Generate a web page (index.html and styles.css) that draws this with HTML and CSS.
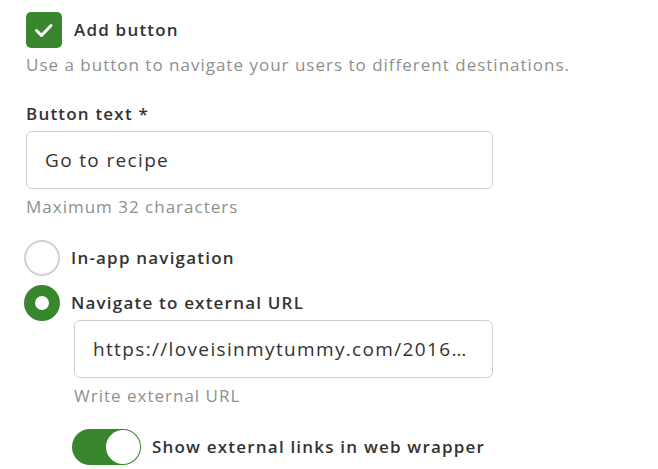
FILE: index.html
```html
<!DOCTYPE html>
<html lang="en">
<head>
<meta charset="utf-8">
<title>Button settings</title>
<link rel="stylesheet" href="styles.css">
</head>
<body>
<div class="panel">
  <label class="check-row">
    <span class="checkbox">
      <svg viewBox="0 0 36 36" width="36" height="36"><path d="M10.5 18.5 L15.5 23.5 L25 13.5" fill="none" stroke="#fff" stroke-width="3" stroke-linecap="round" stroke-linejoin="round"/></svg>
    </span>
    <span class="check-label">Add button</span>
  </label>
  <p class="desc">Use a button to navigate your users to different destinations.</p>

  <div class="field-label">Button text *</div>
  <div class="input">Go to recipe</div>
  <div class="hint">Maximum 32 characters</div>

  <div class="radio-row first">
    <span class="radio"></span>
    <span class="radio-label">In-app navigation</span>
  </div>
  <div class="radio-row second">
    <span class="radio on"></span>
    <span class="radio-label">Navigate to external URL</span>
  </div>
  <div class="sub">
    <div class="input url">https://loveisinmytummy.com/2016…</div>
    <div class="hint">Write external URL</div>
    <div class="toggle-row">
      <span class="toggle"><span class="knob"></span></span>
      <span class="toggle-label">Show external links in web wrapper</span>
    </div>
  </div>
</div>
</body>
</html>
```
FILE: styles.css
```css
html, body {
  margin: 0;
  padding: 0;
  background: #fff;
}
body {
  font-family: "Open Sans", "DejaVu Sans", sans-serif;
  color: #333;
  font-size: 17px;
  letter-spacing: 1px;
}
.panel {
  padding: 12px 0 0 26px;
  display: flex;
  flex-direction: column;
  align-items: flex-start;
}
.check-row {
  display: flex;
  align-items: center;
  gap: 12px;
  height: 36px;
}
.checkbox {
  width: 36px;
  height: 36px;
  border-radius: 5px;
  background: #38872d;
  display: block;
}
.checkbox svg { display: block; }
.check-label, .field-label, .radio-label, .toggle-label {
  font-weight: 600;
  font-size: 17px;
  line-height: 20px;
  letter-spacing: 1.2px;
  color: #333;
}
.desc {
  margin: 7px 0 0;
  line-height: 20px;
  color: #8f8f8f;
}
.field-label {
  margin-top: 29px;
}
.input {
  margin-top: 7px;
  box-sizing: border-box;
  width: 467px;
  height: 58px;
  border: 1px solid #cfcfcf;
  border-radius: 6px;
  padding: 0 18px;
  display: flex;
  align-items: center;
  font-size: 19px;
  letter-spacing: 1.35px;
  color: #333;
  white-space: nowrap;
  overflow: hidden;
}
.hint {
  margin-top: 8px;
  line-height: 20px;
  color: #8f8f8f;
}
.radio-row {
  display: flex;
  align-items: center;
  gap: 11px;
  height: 36px;
  margin-left: -2px;
}
.radio-row.first { margin-top: 23px; }
.radio-row.second { margin-top: 9px; }
.radio {
  box-sizing: border-box;
  width: 36px;
  height: 36px;
  border-radius: 50%;
  border: 2px solid #d2d2d2;
  background: #fff;
}
.radio.on {
  border: 11px solid #38872d;
}
.sub {
  padding-left: 48px;
  margin-top: -1px;
  display: flex;
  flex-direction: column;
  align-items: flex-start;
}
.input.url {
  margin-top: 0;
  width: 419px;
}
.toggle-row {
  margin-top: 23px;
  margin-left: -2px;
  display: flex;
  align-items: center;
  gap: 11px;
}
.toggle {
  box-sizing: border-box;
  width: 69px;
  height: 36px;
  border-radius: 18px;
  background: #38872d;
  padding: 1px;
  display: flex;
  justify-content: flex-end;
}
.knob {
  width: 34px;
  height: 34px;
  border-radius: 50%;
  background: #fff;
}
```
